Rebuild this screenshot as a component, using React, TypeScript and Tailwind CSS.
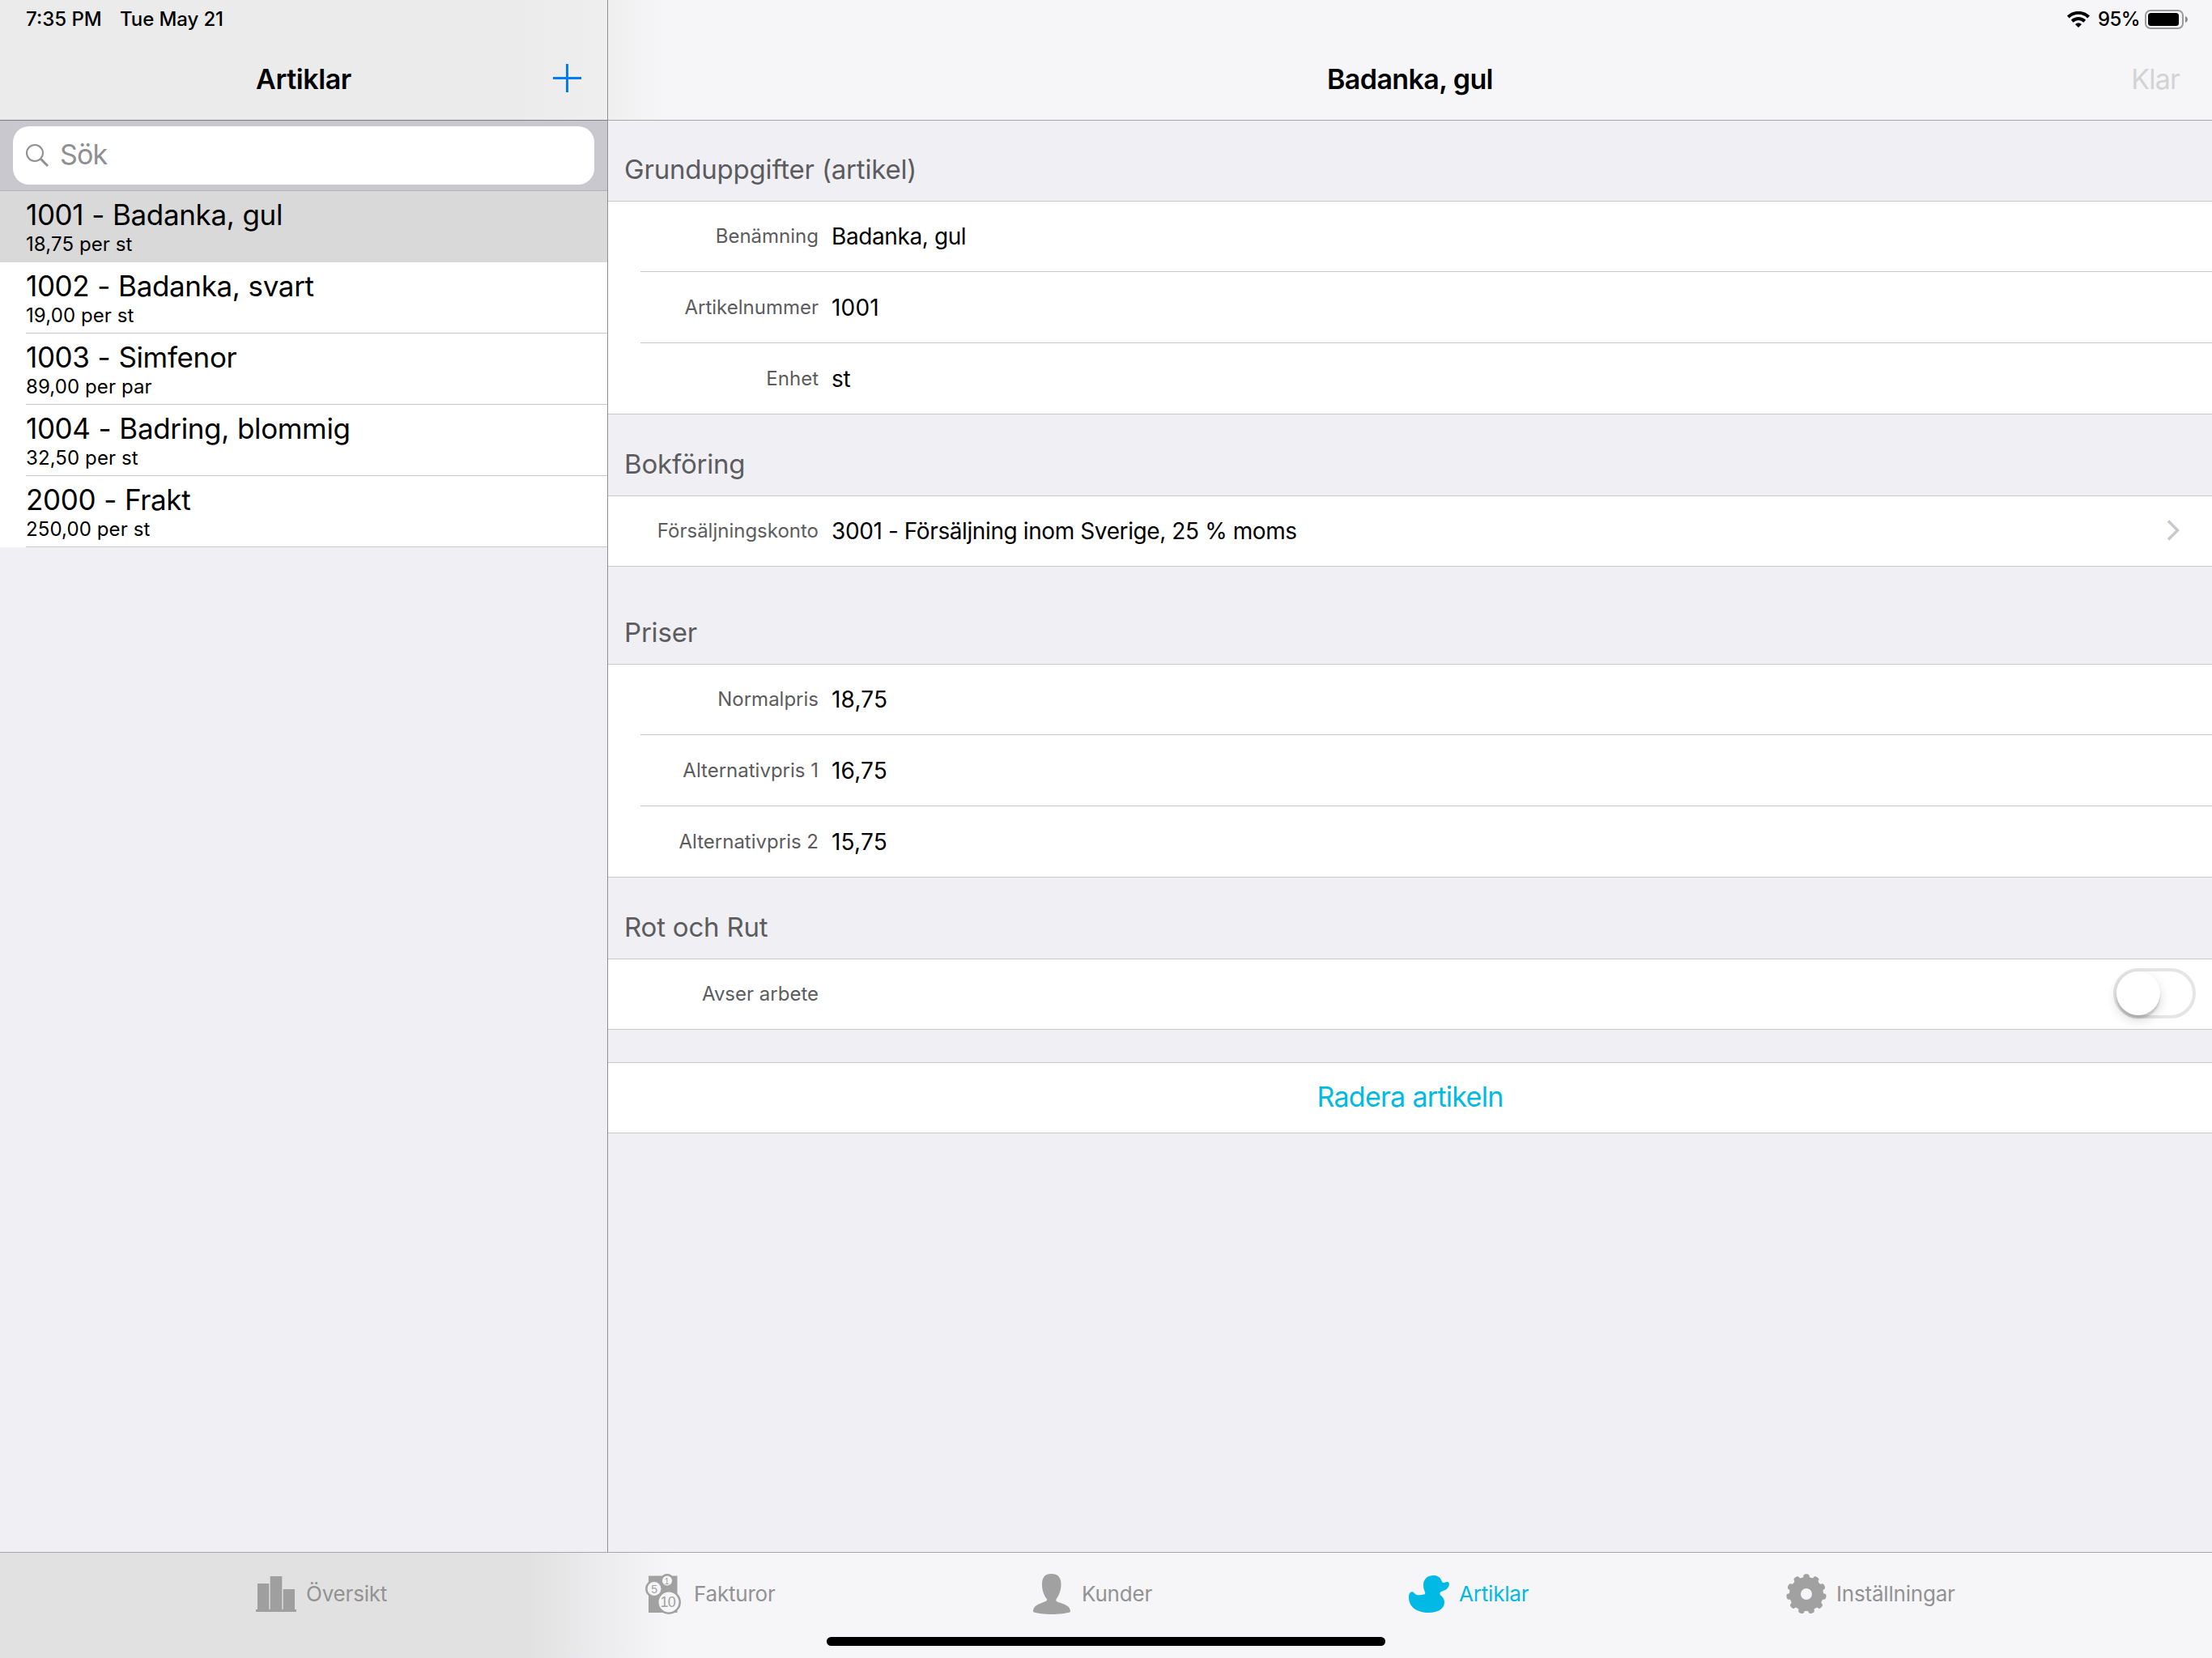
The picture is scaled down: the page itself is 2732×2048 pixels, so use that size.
import type { ReactNode } from "react";

type Article = {
  number: string;
  name: string;
  price: string;
  selected?: boolean;
};

const articles: Article[] = [
  { number: "1001", name: "Badanka, gul", price: "18,75 per st", selected: true },
  { number: "1002", name: "Badanka, svart", price: "19,00 per st" },
  { number: "1003", name: "Simfenor", price: "89,00 per par" },
  { number: "1004", name: "Badring, blommig", price: "32,50 per st" },
  { number: "2000", name: "Frakt", price: "250,00 per st" },
];

function StatusBar() {
  return (
    <div className="flex h-[48px] items-center justify-end pr-[30px]">
      <svg viewBox="0 0 28 20" className="h-[20px] w-[28px]" fill="none" stroke="#000" strokeWidth="4">
        <path d="M1.4 7a18 18 0 0 1 25.200 0" />
        <path d="M6.3 12.200a11 11 0 0 1 15.400 0" />
        <path d="M10 16a5.500 5.500 0 0 1 8 0L14 20z" fill="#000" stroke="none" />
      </svg>
      <span className="ml-[10px] w-[50px] text-[24px] font-medium tracking-[-0.6px]">95%</span>
      <svg viewBox="0 0 53 24" className="ml-[8px] h-[24px] w-[53px]">
        <rect x="1" y="1" width="46" height="22" rx="6" fill="none" stroke="#999" strokeWidth="2" />
        <rect x="4" y="4" width="38" height="16" rx="3.5" />
        <path d="M50 8c4 1.500 4 6.500 0 8z" fill="#8a8a8a" />
      </svg>
    </div>
  );
}

function ArticleRow({ article }: { article: Article }) {
  return (
    <li className={article.selected ? "h-[88px] bg-[#d9d9d9] pl-[32px]" : "h-[88px] bg-white pl-[32px]"}>
      <div
        className={
          article.selected
            ? "h-[88px] border-b border-[#d9d9d9] pt-[8px]"
            : "h-[88px] border-b border-[#c8c7cc] pt-[8px]"
        }
      >
        <div className="h-[44px] text-[35px] leading-[43px] tracking-[-0.35px] [word-spacing:0.5px] whitespace-nowrap">
          {article.number} - {article.name}
        </div>
        <div className="h-[28px] text-[24px] leading-[28px] tracking-[0.1px] whitespace-nowrap">
          {article.price}
        </div>
      </div>
    </li>
  );
}

function Section({
  title,
  height = "h-[100px]",
  children,
}: {
  title: string;
  height?: string;
  children: ReactNode;
}) {
  return (
    <section>
      <h2 className={`${height} flex items-end pb-[19px] pl-[20px] text-[33px] leading-[40px] tracking-[-0.2px] text-[#5c5c5e]`}>
        {title}
      </h2>
      <div className="border-y border-[#c8c7cc] bg-white">{children}</div>
    </section>
  );
}

function Field({
  label,
  value = "",
  height = "h-[88px]",
  divider,
  children,
}: {
  label: string;
  value?: string;
  height?: string;
  divider?: boolean;
  children?: ReactNode;
}) {
  const numeric = /^[\d,]+$/.test(value);
  return (
    <div className="pl-[40px]">
      <div className={`${height} flex items-center ${divider ? "border-b border-[#c8c7cc]" : ""}`}>
        <span className="w-[220px] text-right text-[24px] text-[#5c5c5e]">{label}</span>
        <span
          className={
            numeric
              ? "ml-[16px] flex-1 text-[28px] tracking-[0.2px]"
              : "ml-[16px] flex-1 text-[28px] tracking-[-0.4px]"
          }
        >
          {value}
        </span>
        {children}
      </div>
    </div>
  );
}

function OverviewIcon() {
  return (
    <svg viewBox="0 0 50 44" className="h-[44px] w-[50px]" fill="#9f9f9f">
      <path d="M2 9h14.300v32h1.400V0h14.600v41h1.400V16h14.300v25h2v3H0v-3h2z" />
    </svg>
  );
}

function InvoiceIcon() {
  return (
    <svg
      viewBox="0 0 44 50"
      className="h-[50px] w-[44px]"
      fontFamily="Liberation Sans, sans-serif"
      textAnchor="middle"
    >
      <path d="M4 2.500h35.500v45.500H4z" fill="#a1a1a1" />
      <g fill="#f6f6f8" stroke="#a1a1a1" strokeWidth="2.500">
        <circle cx="27" cy="8.500" r="7.300" />
        <circle cx="11" cy="18.500" r="9.700" />
        <circle cx="29" cy="35" r="13.700" />
      </g>
      <g fill="#a1a1a1">
        <text x="26.500" y="12.700" fontSize="11">1</text>
        <text x="11" y="23.500" fontSize="14">5</text>
        <text x="28" y="41.300" fontSize="18" textLength="19">10</text>
      </g>
    </svg>
  );
}

function CustomerIcon() {
  return (
    <svg viewBox="0 0 46 50" className="h-[50px] w-[46px]" fill="#a1a1a1">
      <path d="M22.500 0c8 0 12 4.500 12 13 0 8-3 14-5.800 18-1 2-.2 3 2.300 4 8 3 15 4 15 12-9 4-37 4-46 0 0-8 6-9 13-12 3-1 5-2 3.800-4-3-4-5.800-10-5.800-18C11 4.500 14.500 0 22.500 0z" />
    </svg>
  );
}

function DuckIcon() {
  return (
    <svg viewBox="0 0 50 46" className="h-[46px] w-[50px]" fill="currentColor">
      <path d="M30.500 0C36 0 39.500 3 41 7.500c.4 1.500 1.500 1.700 3 1.200 2-.6 3.600-1 5-.2 1.500 1.200 1 4.500-1 7-2 2.700-5 3.300-8 4.500-2 1-2 3.500-.5 4.700 2.500 2 4.500 4.500 4.500 8.300 0 8-7.500 13-19.500 13C10.500 46 0 39.500 0 27c0-4 1.500-7.500 4.500-6.700 2.500.7 3 3.700 6.500 4 3 .3 5-.8 7.500-.8 1.500 0 2-1 1.500-2.700-.7-2.300-2-4.300-2-8.800C18 4.500 23 0 30.500 0z" />
    </svg>
  );
}

function GearIcon() {
  const teeth = Array.from({ length: 11 }, (_, i) => (i * 360) / 11);
  return (
    <svg viewBox="0 0 50 50" className="h-[50px] w-[50px]" fill="#a1a1a1">
      <circle cx="25" cy="25" r="14" fill="none" stroke="#a1a1a1" strokeWidth="14" />
      {teeth.map((angle) => (
        <path
          key={angle}
          d="M19.500 6c2-1 1.700-3 2-4 .4-2.300 6.600-2.300 7 0 .3 1 0 3 2 4z"
          transform={`rotate(${angle} 25 25)`}
        />
      ))}
    </svg>
  );
}

export default function App() {
  return (
    <div className="flex h-[2048px] w-[2732px] flex-col overflow-hidden bg-[#efeff4] font-['Inter','Liberation_Sans',sans-serif] text-black">
      <div className="flex h-[1917px]">
        <aside className="w-[751px] border-r border-[#8e8e93]">
          <header className="h-[149px] border-b border-[#7f7f84] bg-[linear-gradient(90deg,#ebebec_0,#ebebec_86%,#efeff0_100%)]">
            <div className="flex h-[48px] items-center pl-[32px] text-[24px] font-medium">
              <span className="w-[116px]">7:35 PM</span>
              <span className="tracking-[-0.1px]">Tue May 21</span>
            </div>
            <div className="flex h-[98px] items-center pr-[32px] pl-[67px]">
              <h1 className="flex-1 text-center text-[34px] font-semibold tracking-[-0.4px]">Artiklar</h1>
              <svg viewBox="0 0 35 35" className="mb-[2px] h-[35px] w-[35px]" stroke="#007aff" strokeWidth="3">
                <path d="M17.500 0v35M0 17.500h35" />
              </svg>
            </div>
          </header>
          <div className="h-[87px] border-b border-[#b4b4b6] bg-[#c9c8ce] px-[16px] py-[7px]">
            <div className="flex h-[72px] items-center rounded-[20px] bg-white pl-[16px] text-[34px] text-[#8e8e93]">
              <svg viewBox="0 0 28 28" className="mr-[14px] h-[28px] w-[28px]" fill="none" stroke="currentColor">
                <circle cx="11" cy="11" r="10" strokeWidth="2" />
                <path d="M18.500 18.500l8.500 8.500" strokeWidth="3" />
              </svg>
              <span className="pb-[3px] tracking-[-0.9px]">Sök</span>
            </div>
          </div>
          <ul>
            {articles.map((article) => (
              <ArticleRow key={article.number} article={article} />
            ))}
          </ul>
        </aside>

        <main className="flex-1">
          <header className="h-[149px] border-b border-[#a7a7aa] bg-[linear-gradient(90deg,#efeff0_0,#f6f6f8_70px,#f6f6f8_100%)]">
            <StatusBar />
            <div className="flex h-[99px] items-center px-[40px]">
              <span className="w-[100px]" />
              <h1 className="flex-1 text-center text-[34px] font-semibold tracking-[-0.6px]">Badanka, gul</h1>
              <button className="w-[100px] text-right text-[34px] tracking-[-0.8px] text-[#d3d3d4]">Klar</button>
            </div>
          </header>

          <Section title="Grunduppgifter (artikel)" height="h-[99px]">
            <Field label="Benämning" value="Badanka, gul" height="h-[87px]" divider />
            <Field label="Artikelnummer" value="1001" divider />
            <Field label="Enhet" value="st" height="h-[87px]" />
          </Section>
          <Section title="Bokföring">
            <Field
              label="Försäljningskonto"
              value="3001 - Försäljning inom Sverige, 25 % moms"
              height="h-[86px]"
            >
              <svg
                viewBox="0 0 16 26"
                className="mr-[40px] mb-[2px] h-[26px] w-[16px]"
                fill="none"
                stroke="#c7c7cc"
                strokeWidth="3.500"
              >
                <path d="M2 1.500L13.500 13 2 24.500" />
              </svg>
            </Field>
          </Section>
          <Section title="Priser" height="h-[120px]">
            <Field label="Normalpris" value="18,75" height="h-[87px]" divider />
            <Field label="Alternativpris 1" value="16,75" divider />
            <Field label="Alternativpris 2" value="15,75" height="h-[87px]" />
          </Section>
          <Section title="Rot och Rut">
            <Field label="Avser arbete" height="h-[86px]">
              <div className="mr-[20px] mb-[2px] h-[62px] w-[102px] rounded-full border-[4px] border-[#e5e5e5]">
                <div className="h-[54px] w-[54px] rounded-full bg-white shadow-[0_6px_14px_rgba(0,0,0,0.16),0_4px_2px_rgba(0,0,0,0.14)]" />
              </div>
            </Field>
          </Section>
          <button className="mt-[40px] block h-[88px] w-full border-y border-[#c8c7cc] bg-white pb-[3px] text-[34px] tracking-[-0.7px] text-[#00b9e4]">
            Radera artikeln
          </button>
        </main>
      </div>

      <footer className="h-[131px] border-t border-[#a7a7aa] bg-[linear-gradient(90deg,#e1e1e2_0,#e1e1e2_650px,#f6f6f8_830px,#f6f6f8_100%)]">
        <nav className="flex h-[101px] items-center pl-[316px] text-[26px] tracking-[-0.2px] text-[#929292]">
          <div className="flex w-[481px] items-center gap-[12px]">
            <OverviewIcon />
            Översikt
          </div>
          <div className="flex w-[479px] items-center gap-[16px]">
            <InvoiceIcon />
            Fakturor
          </div>
          <div className="flex w-[464px] items-center gap-[14px]">
            <CustomerIcon />
            Kunder
          </div>
          <div className="flex w-[466px] items-center gap-[12px] text-[#00b9e4]">
            <DuckIcon />
            Artiklar
          </div>
          <div className="flex items-center gap-[12px]">
            <GearIcon />
            Inställningar
          </div>
        </nav>
        <div className="mx-auto mt-[3px] h-[11px] w-[690px] rounded-full bg-black" />
      </footer>
    </div>
  );
}
